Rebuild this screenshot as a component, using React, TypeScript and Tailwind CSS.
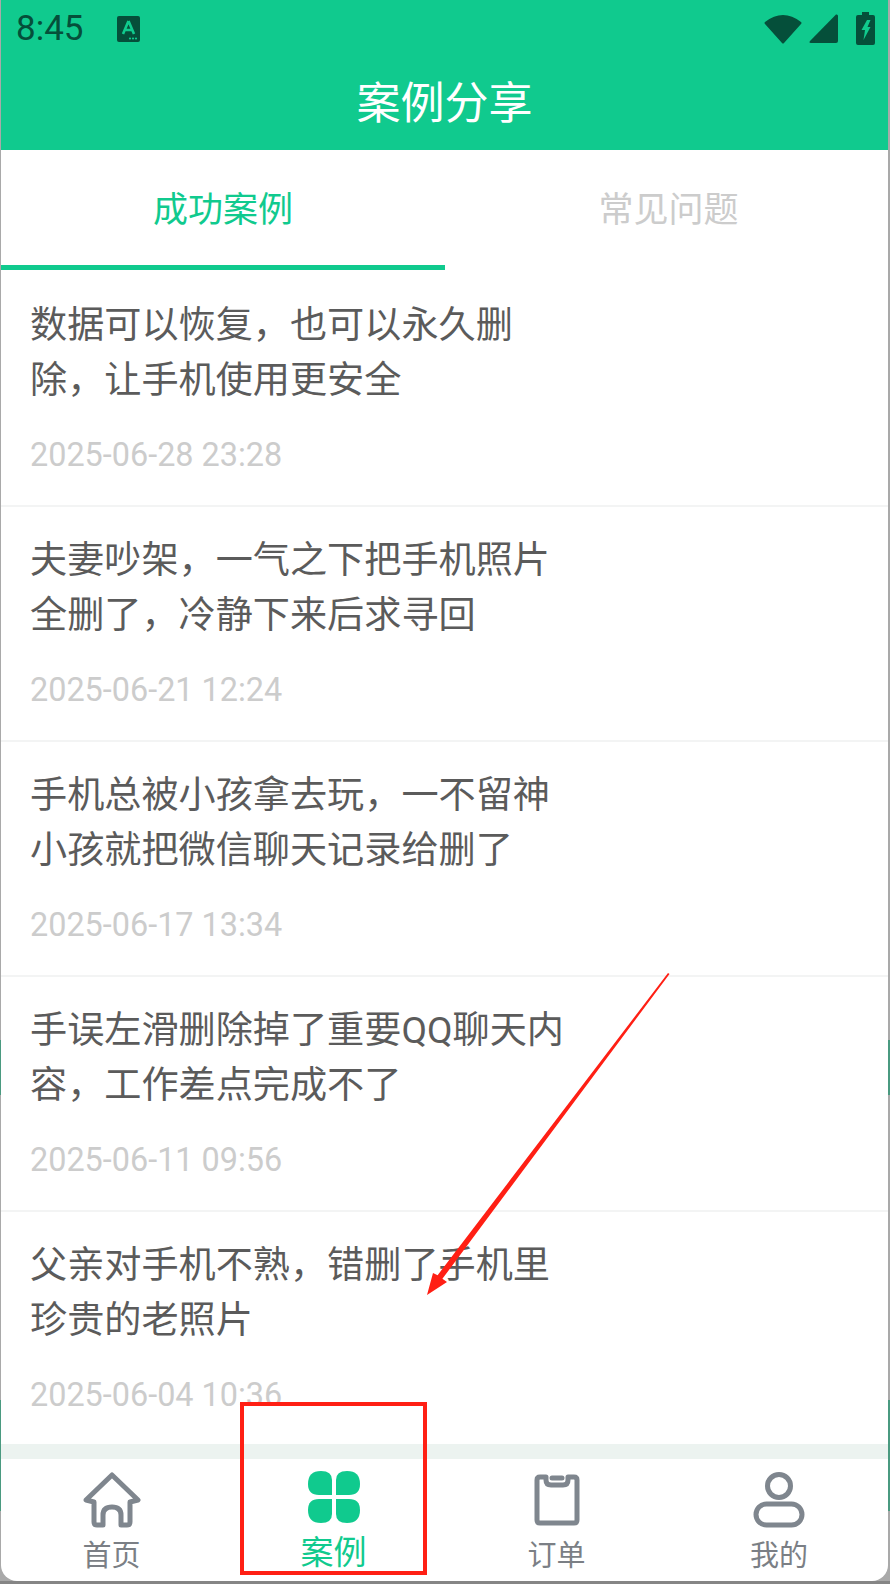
import React from "react";

const GREEN = "#10ca8e";

const items = [
  { l1: "数据可以恢复，也可以永久删", l2: "除，让手机使用更安全", d: "2025-06-28 23:28" },
  { l1: "夫妻吵架，一气之下把手机照片", l2: "全删了，冷静下来后求寻回", d: "2025-06-21 12:24" },
  { l1: "手机总被小孩拿去玩，一不留神", l2: "小孩就把微信聊天记录给删了", d: "2025-06-17 13:34" },
  { l1: "手误左滑删除掉了重要QQ聊天内", l2: "容，工作差点完成不了", d: "2025-06-11 09:56" },
  { l1: "父亲对手机不熟，错删了手机里", l2: "珍贵的老照片", d: "2025-06-04 10:36" },
];

function Row({ l1, l2, d, last }: { l1: string; l2: string; d: string; last?: boolean }) {
  return (
    <div className={`h-[235px] shrink-0 pl-[29px] pt-[26px] ${last ? "" : "border-b-2 border-[#f3f4f4]"}`}>
      <div className="text-[37.15px] leading-[55px] text-[#5b5b5b] whitespace-nowrap font-['Roboto','Noto_Sans_CJK_SC',sans-serif]">{l1}</div>
      <div className="text-[37.15px] leading-[55px] text-[#5b5b5b] whitespace-nowrap font-['Roboto','Noto_Sans_CJK_SC',sans-serif]">{l2}</div>
      <div className="mt-[27px] text-[32.4px] leading-[40px] text-[#cccccc] font-['Roboto'] whitespace-nowrap">{d}</div>
    </div>
  );
}

function Tab({ label, active, className, children }: { label: string; active?: boolean; className?: string; children: React.ReactNode }) {
  return (
    <div className={`shrink-0 flex flex-col items-center ${className ?? ""}`}>
      <div className="h-[82px] w-full flex items-center justify-center">{children}</div>
      <div className={active ? "text-[33px] leading-[34px] -mt-[8px] text-[#10ca8e]" : "text-[29px] leading-[34px] -mt-[5px] text-[#7b7f85]"}>{label}</div>
    </div>
  );
}

export default function App() {
  return (
    <div className="relative w-[890px] h-[1584px] overflow-hidden bg-[linear-gradient(to_bottom,#a9a9a9_0,#a9a9a9_1040px,#4a9a80_1040px,#4a9a80_1095px,#a9a9a9_1095px,#a9a9a9_1400px,#4a9a80_1400px,#4a9a80_1511px,#a9a9a9_1511px,#a9a9a9_1581px,#858585_1581px)] font-['Noto_Sans_CJK_SC','Noto_Sans',sans-serif]">
      <div className="ml-[1px] mr-[2px] h-[1581px] bg-white rounded-b-[16px] overflow-hidden flex flex-col">
        <div className="h-[150px] shrink-0 bg-[#10ca8e] flex flex-col">
          <div className="h-[56px] shrink-0 flex items-center pl-[15px] pr-[13px] pt-[1px] text-[#054f3a]">
            <span className="text-[35px] leading-none font-['Roboto']">8:45</span>
            <svg className="ml-[33px]" width="23" height="26" viewBox="0 0 23 26">
              <rect width="23" height="26" rx="2" fill="#054f3a" />
              <path d="M11.5 5 L6 18 M11.5 5 L17 18 M8 14 H15" stroke={GREEN} strokeWidth="2.6" fill="none" />
              <circle cx="13" cy="22.5" r="1.1" fill={GREEN} />
              <circle cx="16" cy="22.5" r="1.1" fill={GREEN} />
              <circle cx="19" cy="22.5" r="1.1" fill={GREEN} />
            </svg>
            <div className="flex-1" />
            <svg width="38" height="31" viewBox="0 0 38 31" className="mr-[7px]">
              <path d="M1 9 Q19 -5 37 9 Q38 10 37 11 L20 30 Q19 31 18 30 L1 11 Q0 10 1 9Z" fill="#054f3a" />
            </svg>
            <svg width="29" height="29" viewBox="0 0 29 29" className="mr-[18px]">
              <path d="M27 0.5 Q29 0 29 2 V27 Q29 29 27 29 H2 Q-0.5 29 1 27 Z" fill="#054f3a" />
            </svg>
            <svg width="19" height="33" viewBox="0 0 19 33">
              <path d="M6 0 H13 V3 H17 Q19 3 19 5 V31 Q19 33 17 33 H2 Q0 33 0 31 V5 Q0 3 2 3 H6 Z" fill="#054f3a" />
              <path d="M11 8 H14.5 L11.5 15 H14.5 L7.5 28 L9 18 H5.5 Z" fill={GREEN} />
            </svg>
          </div>
          <div className="flex-1 flex items-center justify-center pb-[7px] text-white text-[44px] leading-none">案例分享</div>
        </div>

        <div className="h-[120px] shrink-0 flex mb-[2px]">
          <div className="w-[444px] border-b-[5px] border-[#10ca8e] flex items-center justify-center pb-[1px] text-[35px] text-[#10ca8e]">成功案例</div>
          <div className="flex-1 flex items-center justify-center pb-[6px] pl-[4px] text-[35px] text-[#cccccc]">常见问题</div>
        </div>

        <div className="h-[1172px] shrink-0 overflow-hidden flex flex-col">
          {items.map((it, i) => (
            <Row key={it.d} {...it} last={i === items.length - 1} />
          ))}
        </div>

        <div className="h-[15px] shrink-0 bg-[#ecf3f0]" />

        <div className="flex-1 flex">
          <Tab label="首页" className="w-[221px]">
            <svg width="58" height="56" viewBox="0 0 58 56" fill="none" stroke="#7f868e" strokeWidth="5" strokeLinejoin="round" strokeLinecap="round">
              <path d="M29 3 L55 28 L47 30 V50 Q47 53 44 53 H38 V43 Q38 35 29 35 Q20 35 20 43 V53 H14 Q11 53 11 50 V30 L3 28 Z" />
            </svg>
          </Tab>
          <Tab label="案例" active className="w-[223px]">
            <svg width="52" height="52" viewBox="0 0 52 52" fill="#10ca8e" className="mb-[6px]">
              <path d="M13 0 Q24 0 24 9 V24 H11 Q0 24 0 13 Q0 0 13 0Z" />
              <path d="M39 0 Q52 0 52 13 Q52 24 41 24 H28 V9 Q28 0 39 0Z" />
              <path d="M11 28 H24 V43 Q24 52 13 52 Q0 52 0 39 Q0 28 11 28Z" />
              <path d="M28 28 H41 Q52 28 52 39 Q52 52 39 52 Q28 52 28 43 Z" />
            </svg>
          </Tab>
          <Tab label="订单" className="w-[223px]">
            <svg width="46" height="52" viewBox="0 0 46 52" fill="none" stroke="#7f868e" strokeWidth="5" strokeLinejoin="round">
              <path d="M12 3 H6 Q3 3 3 6 V46 Q3 49 6 49 H40 Q43 49 43 46 V6 Q43 3 40 3 H34 V6 Q34 11 29 11 H17 Q12 11 12 6 Z" />
              <path d="M18 4 H28" strokeLinecap="round" />
            </svg>
          </Tab>
          <Tab label="我的" className="w-[220px] pl-[2px]">
            <svg width="52" height="56" viewBox="0 0 52 56" fill="none" stroke="#7f868e" strokeWidth="5">
              <circle cx="26" cy="14" r="11.5" />
              <rect x="3" y="32" width="46" height="21" rx="10.5" />
            </svg>
          </Tab>
        </div>
      </div>

      <div className="absolute left-[240px] top-[1402px] w-[187px] h-[173px] border-[4px] border-[#ff1f14]" />
      <svg className="absolute left-0 top-0 pointer-events-none" width="890" height="1584" viewBox="0 0 890 1584">
        <path d="M668 973 L669.5 974 L442.4 1278.8 L447 1282 L427 1295 L433 1273 L437.6 1275.2 Z" fill="#ff1f14" />
      </svg>
    </div>
  );
}
